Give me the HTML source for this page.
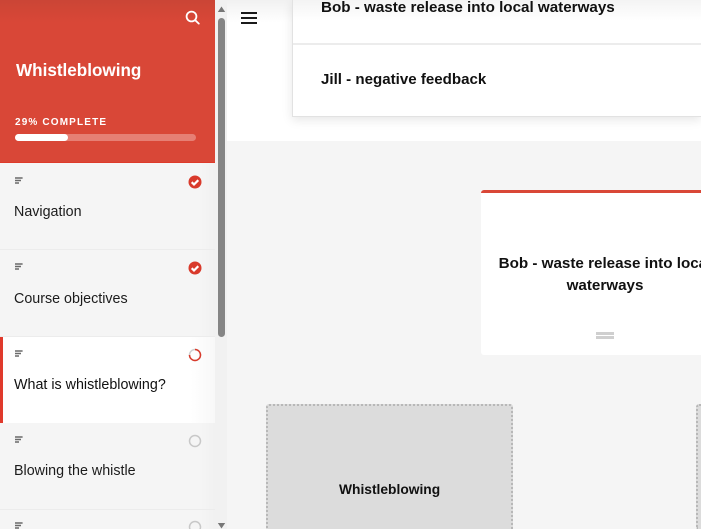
<!DOCTYPE html>
<html lang="en">
<head>
<meta charset="utf-8">
<title>Whistleblowing</title>
<style>
html,body{margin:0;padding:0;width:701px;height:529px;overflow:hidden;background:#fff;font-family:"Liberation Sans",sans-serif;}
#wrap{position:absolute;left:0;top:0;width:701px;height:529px;overflow:hidden;filter:blur(.3px);}
.a{position:absolute;}
.t{position:absolute;white-space:nowrap;}
#side{left:0;top:0;width:215px;height:529px;background:#f5f5f5;overflow:hidden;}
#hero{left:0;top:0;width:215px;height:163px;background:linear-gradient(#cb4536 0,#d94737 22px,#d94737 100%);box-shadow:inset 0 -1px 0 #de3a2a;}
.row{position:absolute;left:0;width:215px;background:linear-gradient(90deg,#f5f5f5 200px,#f1f1f1);border-bottom:1.5px solid #ececec;}
.lbl{position:absolute;left:14px;font-size:14.3px;line-height:18px;color:#1c1c1c;white-space:nowrap;}
.ic{position:absolute;left:15px;width:8px;height:7px;}
.st{position:absolute;left:188px;}
.b{font-weight:700;color:#111;}
</style>
</head>
<body>
<div id="wrap">
<div class="a" id="main" style="left:227px;top:0;width:474px;height:529px;background:#f5f5f5;overflow:hidden;">
  <div class="a" style="left:0;top:0;width:474px;height:141px;background:#fff;"></div>
  <div class="a" style="left:0;top:0;width:474px;height:22px;background:linear-gradient(#f1f1f1,rgba(255,255,255,0));"></div>
  <div class="a" style="left:65px;top:0;width:409px;height:117px;background:#fff;border:1px solid #e2e2e2;border-top:0;border-right:0;box-sizing:border-box;box-shadow:0 3px 10px rgba(0,0,0,.1);"></div>
  <div class="a" style="left:66px;top:0;width:408px;height:20px;background:linear-gradient(#f4f4f4,rgba(255,255,255,0));"></div>
  <div class="a" style="left:66px;top:43px;width:408px;height:2px;background:#ececec;"></div>
  <div class="t b" style="left:94px;top:-1px;font-size:15.2px;line-height:18px;">Bob - waste release into local waterways</div>
  <div class="t b" style="left:94px;top:71px;font-size:15.1px;line-height:18px;">Jill - negative feedback</div>

  <div class="a" style="left:254px;top:190px;width:220px;height:165px;background:#fff;border-radius:3px 0 0 3px;overflow:hidden;">
    <div class="a" style="left:0;top:0;width:220px;height:3px;background:#d94737;"></div>
    <div class="t b" style="left:0;top:63px;width:248px;text-align:center;font-size:15.2px;line-height:22px;">Bob - waste release into local</div>
    <div class="t b" style="left:0;top:85px;width:248px;text-align:center;font-size:15.2px;line-height:22px;">waterways</div>
    <div class="a" style="left:115px;top:142px;width:18px;height:3px;background:#cfcfcf;"></div>
    <div class="a" style="left:115px;top:146px;width:18px;height:3px;background:#cfcfcf;"></div>
  </div>

  <div class="a" style="left:39px;top:404px;width:247px;height:125px;background:#dcdcdc;border:2px dotted #b8b8b8;border-bottom:0;border-radius:3px 3px 0 0;box-sizing:border-box;"></div>
  <div class="t b" style="left:112px;top:481px;font-size:13.8px;line-height:18px;">Whistleblowing</div>
  <div class="a" style="left:469px;top:404px;width:5px;height:125px;background:#dcdcdc;border:2px dotted #b8b8b8;border-width:2px 0 0 2px;border-radius:3px 0 0 0;box-sizing:border-box;"></div>
</div>

<div class="a" style="left:215px;top:0;width:12px;height:529px;background:#f1f1f1;"></div>
<svg class="a" style="left:215px;top:0;" width="12" height="529">
  <path d="M6.5 6.5l3.7 5.5h-7.4z" fill="#777"/>
  <rect x="3" y="18" width="7" height="319" rx="3.5" fill="#858585"/>
  <path d="M6.5 528.5l3.7-5.5h-7.4z" fill="#777"/>
</svg>

<svg class="a" style="left:240px;top:11px;" width="18" height="14">
  <rect x="1" y="1" width="16" height="2" fill="#1a1a1a"/>
  <rect x="1" y="6" width="16" height="2" fill="#1a1a1a"/>
  <rect x="1" y="11" width="16" height="2" fill="#1a1a1a"/>
</svg>

<div class="a" id="side">
  <div class="a" id="hero">
    <svg class="a" style="left:185px;top:10px;" width="15" height="15" fill="none" stroke="#fff" stroke-width="1.8">
      <circle cx="6.5" cy="6.5" r="4.9"/><path d="M10.2 10.2l3.6 3.4" stroke-linecap="round"/>
    </svg>
    <div class="t" style="left:16px;top:60px;font-size:17.1px;line-height:22px;font-weight:700;color:#fff;">Whistleblowing</div>
    <div class="t" style="left:15px;top:117px;font-size:10px;line-height:12px;font-weight:700;color:#fff;letter-spacing:1.15px;">29% COMPLETE</div>
    <div class="a" style="left:15px;top:134px;width:181px;height:7px;border-radius:4px;background:#e67f74;"></div>
    <div class="a" style="left:15px;top:134px;width:53px;height:7px;border-radius:4px;background:#fff;"></div>
  </div>

  <div class="row" style="top:163px;height:86px;"></div>
  <div class="row" style="top:250px;height:85.5px;"></div>
  <div class="row" style="top:337px;height:86px;background:linear-gradient(90deg,#fff 190px,#f8f8f8);border-bottom:0;"></div>
  <div class="a" style="left:0;top:337px;width:3px;height:86px;background:#e03a2c;"></div>
  <div class="row" style="top:423px;height:85.5px;"></div>
  <div class="row" style="top:510px;height:19px;border-bottom:0;"></div>

  <svg class="ic" style="top:177px;" viewBox="0 0 8 7"><path d="M0 .2h7.6v1.6H0zM0 2.7h6v1.6H0zM0 5.2h4v1.6H0z" fill="#6a6a6a"/></svg>
  <svg class="ic" style="top:263px;" viewBox="0 0 8 7"><path d="M0 .2h7.6v1.6H0zM0 2.7h6v1.6H0zM0 5.2h4v1.6H0z" fill="#6a6a6a"/></svg>
  <svg class="ic" style="top:350px;" viewBox="0 0 8 7"><path d="M0 .2h7.6v1.6H0zM0 2.7h6v1.6H0zM0 5.2h4v1.6H0z" fill="#6a6a6a"/></svg>
  <svg class="ic" style="top:436px;" viewBox="0 0 8 7"><path d="M0 .2h7.6v1.6H0zM0 2.7h6v1.6H0zM0 5.2h4v1.6H0z" fill="#6a6a6a"/></svg>
  <svg class="ic" style="top:522px;" viewBox="0 0 8 7"><path d="M0 .2h7.6v1.6H0zM0 2.7h6v1.6H0zM0 5.2h4v1.6H0z" fill="#6a6a6a"/></svg>

  <div class="lbl" style="top:203px;">Navigation</div>
  <div class="lbl" style="top:290px;">Course objectives</div>
  <div class="lbl" style="top:376px;color:#111;">What is whistleblowing?</div>
  <div class="lbl" style="top:462px;">Blowing the whistle</div>

  <svg class="st" style="top:175px;" width="14" height="14"><circle cx="7" cy="7" r="6.5" fill="#d93a2b"/><path d="M3.7 7.2l2.3 2.3 4.3-4.3" fill="none" stroke="#fff" stroke-width="2.2"/></svg>
  <svg class="st" style="top:261px;" width="14" height="14"><circle cx="7" cy="7" r="6.5" fill="#d93a2b"/><path d="M3.7 7.2l2.3 2.3 4.3-4.3" fill="none" stroke="#fff" stroke-width="2.2"/></svg>
  <svg class="st" style="top:348px;" width="14" height="14" fill="none" stroke-width="1.5"><circle cx="7" cy="7" r="5.5" stroke="#cfcfcf"/><path d="M7 1.5A5.5 5.5 0 1 1 1.5 7" stroke="#d93a2b"/></svg>
  <svg class="st" style="top:434px;" width="14" height="14" fill="none"><circle cx="7" cy="7" r="5.5" stroke="#c8c8c8" stroke-width="1.5"/></svg>
  <svg class="st" style="top:520px;" width="14" height="9" fill="none"><circle cx="7" cy="7" r="5.5" stroke="#c8c8c8" stroke-width="1.5"/></svg>
</div>
</div>
</body>
</html>
